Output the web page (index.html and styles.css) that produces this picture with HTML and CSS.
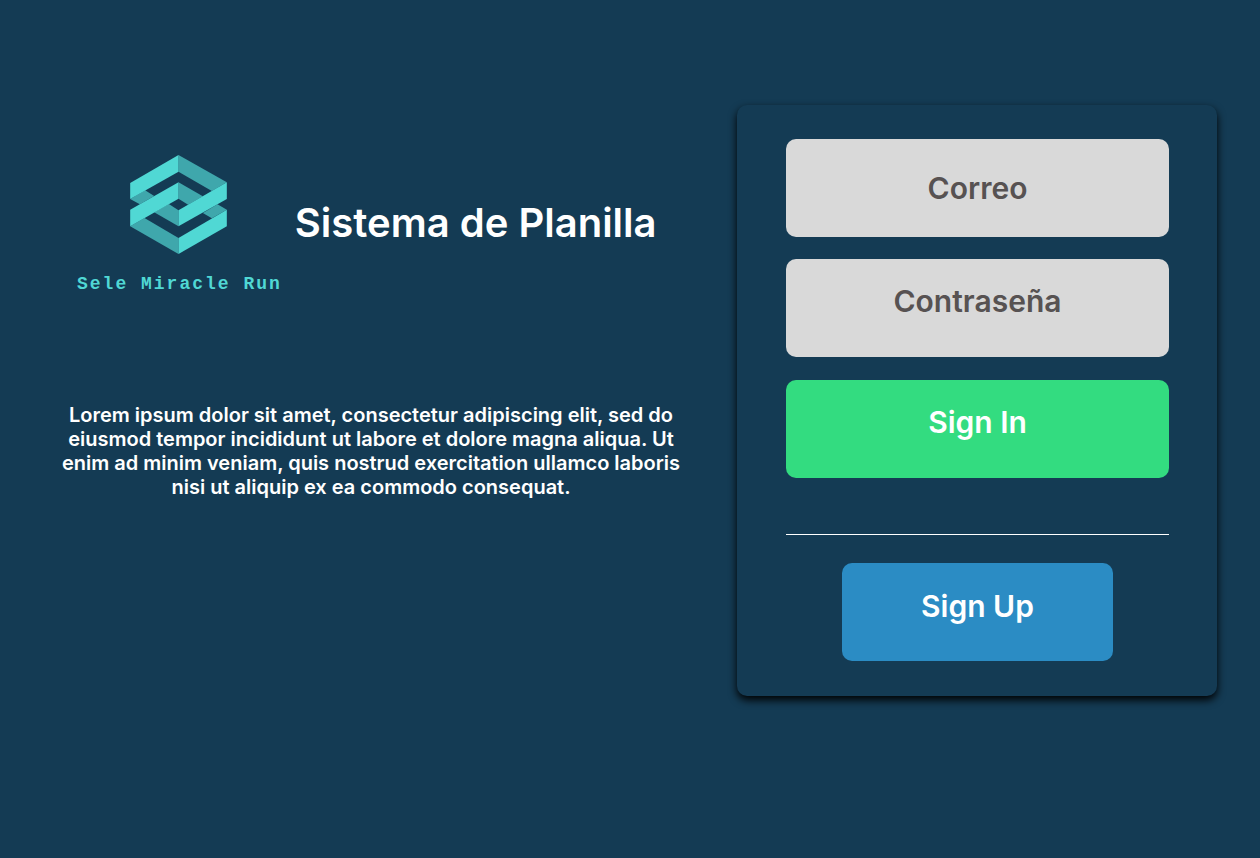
FILE: index.html
```html
<!DOCTYPE html>
<html lang="es">
<head>
<meta charset="utf-8">
<meta name="viewport" content="width=device-width, initial-scale=1">
<title>Sistema de Planilla</title>
<link rel="stylesheet" href="styles.css">
</head>
<body>
<main class="page">
  <section class="intro">
    <header class="brand">
      <div class="logo">
        <svg class="logo-mark" viewBox="30 31 290 297" aria-hidden="true">
          <g class="logo-dark">
            <path d="M175 31 320 113 275 139 175 81Z"/>
            <path d="M30 163 75 137 102 154 59 179Z"/>
            <path d="M175 113 248 155 204 180 175 162Z"/>
            <path d="M102 203 146 178 175 197V245Z"/>
            <path d="M30 245 73 220 175 280V328Z"/>
            <path d="M292 179 320 195 275 221 248 205Z"/>
          </g>
          <g class="logo-light">
            <path d="M30 115 175 31V81L30 163Z"/>
            <path d="M30 195 175 113V162L30 245Z"/>
            <path d="M320 113V163L175 245V197Z"/>
            <path d="M320 195V245L175 328V280Z"/>
          </g>
        </svg>
        <span class="logo-name">Sele Miracle Run</span>
      </div>
      <h1 class="title">Sistema de Planilla</h1>
    </header>
    <p class="description">Lorem ipsum dolor sit amet, consectetur adipiscing elit, sed do eiusmod tempor incididunt ut labore et dolore magna aliqua. Ut enim ad minim veniam, quis nostrud exercitation ullamco laboris nisi ut aliquip ex ea commodo consequat.</p>
  </section>
  <form class="card">
    <input class="field" type="email" placeholder="Correo" aria-label="Correo">
    <input class="field field-raised" type="password" placeholder="Contraseña" aria-label="Contraseña">
    <button class="button sign-in" type="submit">Sign In</button>
    <hr class="divider">
    <button class="button sign-up" type="button">Sign Up</button>
  </form>
</main>
</body>
</html>
```

FILE: styles.css
```css
* {
  box-sizing: border-box;
}

body {
  margin: 0;
  min-height: 100vh;
  background: #143b54;
  color: #fff;
  font-family: Inter, "Liberation Sans", sans-serif;
  font-weight: 600;
}

.page {
  display: grid;
  grid-template-columns: minmax(0, 622fr) minmax(0, 480fr);
  gap: 55px;
  align-items: start;
  padding: 105px 43px 105px 60px;
}

.intro {
  padding-top: 50px;
}

.brand {
  display: flex;
  align-items: center;
  gap: 13px;
  padding-left: 17px;
}

.logo {
  display: flex;
  flex-direction: column;
  align-items: center;
  gap: 20px;
}

.logo-mark {
  width: 97px;
  height: 99px;
  margin-right: 2px;
}

.logo-dark {
  fill: #3fa7ac;
}

.logo-light {
  fill: #50d8d4;
}

.logo-name {
  color: #50d8d4;
  font: 700 18px/20px "Liberation Mono", monospace;
  letter-spacing: 2px;
  white-space: nowrap;
}

.title {
  margin: 0;
  padding-bottom: 4px;
  font-size: 40px;
  font-weight: 600;
  line-height: 48px;
  white-space: nowrap;
}

.description {
  margin: 109px 0 0;
  font-size: 20px;
  line-height: 24px;
  text-align: center;
}

.card {
  display: flex;
  flex-direction: column;
  align-items: center;
  gap: 22px;
  padding: 34px 48px 35px 49px;
  border-radius: 10px;
  background: #143b54;
  box-shadow: 0 4px 8px #000;
}

.field,
.button {
  width: 100%;
  height: 98px;
  margin: 0;
  border: 0;
  border-radius: 10px;
  font: 600 30px/36px Inter, "Liberation Sans", sans-serif;
  text-align: center;
}

.field {
  padding: 0 16px;
  background: #d9d9d9;
  color: #575252;
}

.field::placeholder {
  color: #575252;
  opacity: 1;
}

.field-raised {
  padding-bottom: 14px;
}

.button {
  padding: 0 16px 12px;
  color: #fff;
  cursor: pointer;
}

.sign-in {
  margin-top: 1px;
  padding-bottom: 14px;
  background: #33dc80;
}

.divider {
  width: 100%;
  margin: 34px 0 6px;
  border: 0;
  border-top: 1px solid #fff;
}

.sign-up {
  width: 71%;
  background: #2b8cc4;
}
```
